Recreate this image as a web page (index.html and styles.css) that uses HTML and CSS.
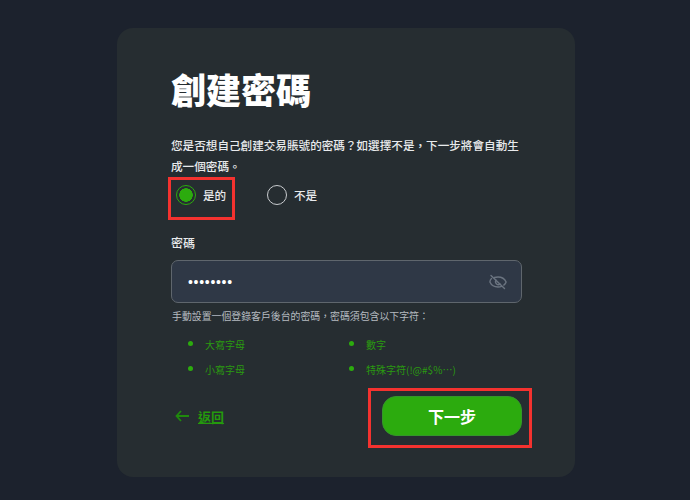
FILE: index.html
```html
<!DOCTYPE html>
<html lang="zh-Hant">
<head>
<meta charset="utf-8">
<title>創建密碼</title>
<link rel="stylesheet" href="styles.css">
</head>
<body>
<main class="card">
  <h1 class="title">創建密碼</h1>
  <p class="intro">您是否想自己創建交易賬號的密碼？如選擇不是，下一步將會自動生成一個密碼。</p>
  <div class="radios">
    <div class="radio radio-yes marked"><span class="dot on"></span><span>是的</span></div>
    <div class="radio"><span class="dot"></span><span>不是</span></div>
  </div>
  <div class="label">密碼</div>
  <div class="input">
    <span class="pw">••••••••</span>
    <svg class="eye" width="18" height="16" viewBox="0 0 18 16" fill="none" stroke="#6b7480" stroke-width="1.4" stroke-linecap="round" stroke-linejoin="round">
      <path d="M2.5 4.5C1.6 5.3 1 6.4.9 8c1.5 3.300 4.500 5 8.100 5 1.300 0 2.500-.2 3.500-.7"/>
      <path d="M5.500 3.500C6.500 3.200 7.700 3 9 3c3.600 0 6.600 1.700 8.100 5-.4 1.200-1.200 2.300-2.300 3.100"/>
      <path d="M7 6.200a3 3 0 0 0 4.300 4"/>
      <path d="M2 1.500 15.500 14.500"/>
    </svg>
  </div>
  <p class="hint">手動設置一個登錄客戶後台的密碼，密碼須包含以下字符：</p>
  <ul class="rules">
    <li>大寫字母</li>
    <li>數字</li>
    <li>小寫字母</li>
    <li>特殊字符(!@#$%…)</li>
  </ul>
  <div class="actions">
    <a class="back" href="#">
      <svg width="14" height="12" viewBox="0 0 14 12" fill="none" stroke="#1f8a0c" stroke-width="1.800"><path d="M14 6H1.500M6 1 1.500 6l4.500 5"/></svg>
      <span class="back-text">返回</span>
    </a>
    <div class="next-wrap marked"><button class="next" type="button">下一步</button></div>
  </div>
</main>
</body>
</html>
```
FILE: styles.css
```css
*, *::before, *::after { box-sizing: border-box; }
html, body { margin: 0; height: 100%; }
body {
  background: #1c222d;
  font-family: "Noto Sans CJK TC", "Noto Sans", sans-serif;
  color: #e8eaec;
  overflow: hidden;
}
.card {
  width: 458px;
  height: 449px;
  margin: 28px 0 0 117px;
  padding: 36px 53px 0 54px;
  background: #262d31;
  border-radius: 16px;
}
.title {
  margin: 0;
  font-size: 35px;
  line-height: 50px;
  font-weight: 900;
  color: #fff;
}
.intro {
  margin: 21px 0 0;
  font-size: 11.600px;
  line-height: 21px;
  width: 352px;
  font-weight: 500;
}
.radios {
  display: flex;
  align-items: center;
  margin: 7px 0 0 5px;
  height: 22px;
}
.radio {
  display: flex;
  align-items: center;
  gap: 7px;
  font-size: 11.600px;
  font-weight: 500;
}
.radio-yes { width: 91px; position: relative; }
.radio-yes.marked::after {
  content: "";
  position: absolute;
  left: -8px;
  top: -8px;
  width: 67px;
  height: 43px;
  border: 3px solid #f4322f;
}
.dot {
  width: 20px;
  height: 20px;
  border-radius: 50%;
  border: 1.500px solid #c9cccf;
  flex: none;
}
.dot.on {
  border-color: #2cab0e;
  background: radial-gradient(circle, #2cab0e 0 6.500px, transparent 7px);
}
.label {
  margin-top: 28px;
  font-size: 12px;
  line-height: 18px;
  font-weight: 500;
}
.input {
  display: flex;
  align-items: center;
  justify-content: space-between;
  width: 351px;
  height: 43px;
  margin-top: 8px;
  padding: 0 14px 0 16px;
  background: #2f3846;
  border: 1px solid #5f666d;
  border-radius: 7px;
}
.pw {
  font-family: "Liberation Sans", sans-serif;
  font-size: 14px;
  letter-spacing: .7px;
  color: #fff;
}
.hint {
  margin: 5px 0 0 1px;
  font-size: 9.900px;
  line-height: 16px;
  color: #b5bbc0;
}
.rules {
  display: grid;
  grid-template-columns: 161px 1fr;
  grid-auto-rows: 25px;
  margin: 8px 0 0;
  padding: 0 0 0 17px;
  list-style: none;
  font-size: 10px;
  line-height: 25px;
  color: #2a9a10;
}
.rules li {
  display: flex;
  align-items: center;
  gap: 12px;
}
.rules li::before {
  content: "";
  width: 5px;
  height: 5px;
  margin-top: -3px;
  border-radius: 50%;
  background: #2cab0e;
  flex: none;
}
.actions {
  display: flex;
  justify-content: space-between;
  align-items: center;
  margin-top: 14px;
  width: 351px;
}
.back {
  display: flex;
  align-items: center;
  gap: 9px;
  margin-left: 4px;
  font-size: 13px;
  font-weight: 700;
  color: #249a0c;
  text-decoration: none;
}
.back-text { text-decoration: underline; }
.next-wrap { position: relative; }
.next-wrap.marked::after {
  content: "";
  position: absolute;
  left: -14px;
  top: -8px;
  width: 164px;
  height: 60px;
  border: 3px solid #f4322f;
  pointer-events: none;
}
.next {
  display: block;
  width: 140px;
  height: 40px;
  padding: 0;
  border: 1px solid #35962a;
  border-radius: 14px;
  background: #2cab0e;
  color: #fff;
  font-family: inherit;
  font-size: 16px;
  font-weight: 700;
}
```
